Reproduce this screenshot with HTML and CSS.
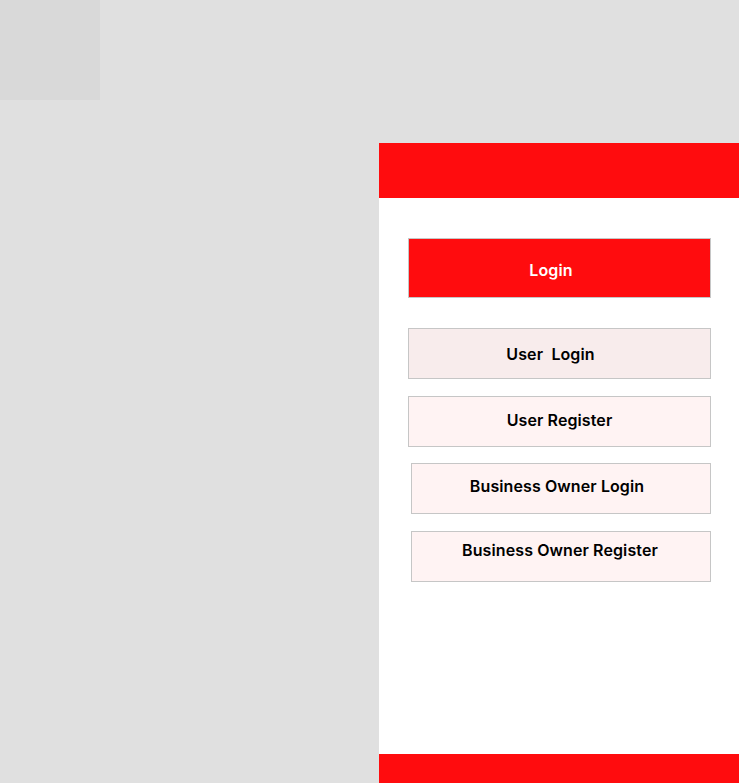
FILE: index.html
```html
<!DOCTYPE html>
<html lang="en">
<head>
<meta charset="utf-8">
<title>Login</title>
<link rel="stylesheet" href="styles.css">
</head>
<body>
<div class="corner"></div>
<div class="panel">
  <header class="panel-head"></header>
  <main class="panel-body">
    <div class="btn btn-primary">Login</div>
    <div class="btn btn-user-login">User&nbsp; Login</div>
    <div class="btn btn-user-register">User Register</div>
    <div class="btn btn-biz btn-biz-login">Business Owner Login</div>
    <div class="btn btn-biz btn-biz-register">Business Owner Register</div>
  </main>
  <footer class="panel-foot"></footer>
</div>
</body>
</html>
```

FILE: styles.css
```css
* { box-sizing: border-box; }
html, body { margin: 0; padding: 0; }
body {
  background: #e0e0e0;
  font-family: Inter, "Noto Sans", sans-serif;
  width: 739px;
  height: 783px;
  overflow: hidden;
  display: flex;
  flex-direction: column;
}
.corner {
  width: 100px;
  height: 100px;
  background: #d9d9d9;
  flex: none;
}
.panel {
  margin-top: 43px;
  margin-left: 379px;
  width: 360px;
  flex: 1;
  background: #ffffff;
  display: flex;
  flex-direction: column;
}
.panel-head {
  height: 55px;
  background: #ff0c0e;
  flex: none;
}
.panel-body {
  flex: 1;
  display: flex;
  flex-direction: column;
  padding: 40px 28px 0 29px;
}
.panel-foot {
  height: 29px;
  background: #ff0c0e;
  flex: none;
}
.btn {
  border: 1px solid #c6c6c6;
  font-size: 16px;
  font-weight: 600;
  letter-spacing: 0.1px;
  line-height: 19px;
  color: #000;
  text-align: center;
  height: 51px;
}
.btn-primary {
  height: 60px;
  background: #ff0c0e;
  color: #fff;
  padding-top: 22px;
  padding-right: 17px;
  margin-bottom: 30px;
}
.btn-user-login {
  background: #f8ecec;
  padding-top: 16px;
  padding-right: 18px;
  margin-bottom: 17px;
}
.btn-user-register {
  background: #fff3f3;
  padding-top: 14px;
  margin-bottom: 16px;
}
.btn-biz {
  background: #fff3f3;
  margin-left: 3px;
}
.btn-biz-login {
  padding-top: 13px;
  padding-right: 8px;
  margin-bottom: 17px;
}
.btn-biz-register {
  padding-top: 9px;
  padding-right: 2px;
}
```
